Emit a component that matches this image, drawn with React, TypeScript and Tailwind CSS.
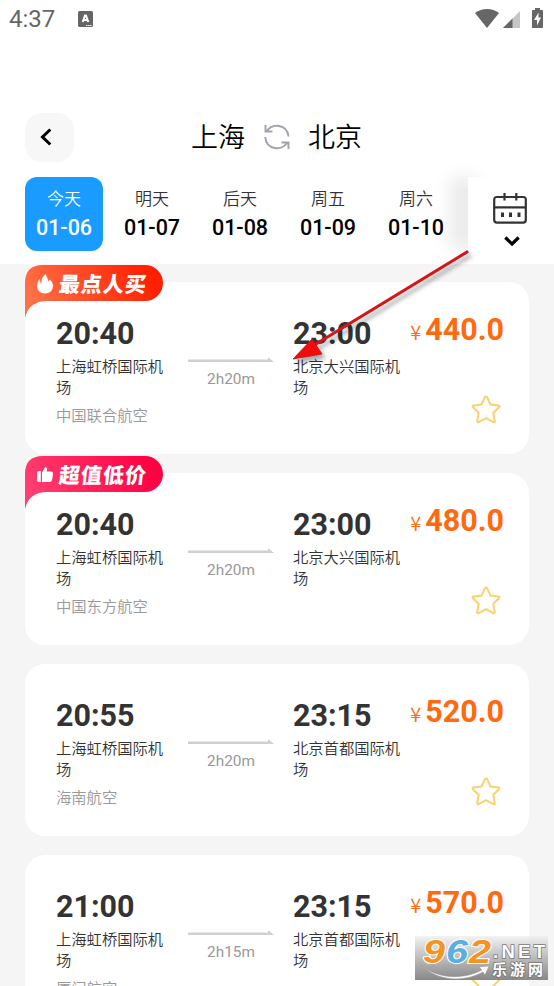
import clsx from 'clsx'

type Flight = {
  depart: string
  arrive: string
  from: string
  to: string
  duration: string
  airline: string
  price: string
  tag?: 'hot' | 'cheap'
}

const days = [
  { label: '今天', date: '01-06' },
  { label: '明天', date: '01-07' },
  { label: '后天', date: '01-08' },
  { label: '周五', date: '01-09' },
  { label: '周六', date: '01-10' },
]

const flights: Flight[] = [
  { depart: '20:40', arrive: '23:00', from: '上海虹桥国际机场', to: '北京大兴国际机场', duration: '2h20m', airline: '中国联合航空', price: '440.0', tag: 'hot' },
  { depart: '20:40', arrive: '23:00', from: '上海虹桥国际机场', to: '北京大兴国际机场', duration: '2h20m', airline: '中国东方航空', price: '480.0', tag: 'cheap' },
  { depart: '20:55', arrive: '23:15', from: '上海虹桥国际机场', to: '北京首都国际机场', duration: '2h20m', airline: '海南航空', price: '520.0' },
  { depart: '21:00', arrive: '23:15', from: '上海虹桥国际机场', to: '北京首都国际机场', duration: '2h15m', airline: '厦门航空', price: '570.0' },
]

const StatusBar = () => (
  <div className="flex h-10 items-start justify-between pt-[6px] pr-[11px] pl-[9px] text-[#666]">
    <div className="flex items-center">
      <span className="text-[24px] leading-[26px]">4:37</span>
      <svg className="mt-[-1px] ml-[23px]" width="15" height="16" viewBox="0 0 15 16">
        <rect width="15" height="16" rx="1.5" fill="#666" />
        <path d="M4.700 11L7 4.500h1L10.300 11M5.700 9h3.600" fill="none" stroke="#fff" strokeWidth="2" />
        <path d="M8 14.500h5.500" stroke="#fff" strokeWidth="1" strokeDasharray="1.500 .6" />
      </svg>
    </div>
    <div className="flex items-start pt-[1px]">
      <svg className="mt-[2px]" width="24" height="19" viewBox="0 0 24 19">
        <path d="M0 4C7-1.300 17-1.300 24 4L12 19z" fill="#666" />
      </svg>
      <svg className="mt-[4px] ml-[4px]" width="17" height="17" viewBox="0 0 17 17">
        <path d="M17 0v17H0z" fill="#c6c6c6" />
        <path d="M9.500 7.500V17H0z" fill="#666" />
      </svg>
      <svg className="mt-[1px] ml-[12px]" width="11" height="20" viewBox="0 0 11 20">
        <path d="M3 0h5v2h2.200q.8 0 .8.8v16.400q0 .8-.8.8H.8q-.8 0-.8-.8V2.800Q0 2 .8 2H3z" fill="#666" />
        <path d="M6.500 4.500L2 12h3v5.500l4-8H6.500z" fill="#fff" />
      </svg>
    </div>
  </div>
)

const RouteHeader = () => (
  <div className="mt-[72px] flex h-[50px] items-center pl-[25px]">
    <button className="flex h-[49px] w-[49px] items-center justify-center rounded-[17px] bg-[#f7f7f7]">
      <svg className="mr-[7px]" width="12" height="18" viewBox="0 0 12 18">
        <path d="M10.300 1.500L2.500 9l7.800 7.500" fill="none" stroke="#000" strokeWidth="3" />
      </svg>
    </button>
    <div className="ml-[117px] flex items-center pt-[1px] text-[27px] leading-[40px] font-[350] text-black">
      <span>上海</span>
      <svg className="mt-[-1px] mr-[18px] ml-[19px]" width="26" height="26" viewBox="0 0 26 26" fill="none" stroke="#a3a3ad" strokeWidth="2">
        <path d="M1.500 1v6.500h7M2.500 7.500C8-.8 23-.8 24.500 12.500" />
        <path d="M24.500 25v-6.500h-7M23.500 18.500C18 27 2.500 26.500 1.200 13" />
      </svg>
      <span>北京</span>
    </div>
  </div>
)

const DateBar = () => (
  <div className="relative mt-[15px] flex h-[87px] pl-[25px]">
    <div className="flex h-[74px] gap-[10px]">
      {days.map((day, i) => (
        <div
          key={day.date}
          className={clsx(
            'flex w-[78px] flex-col items-center rounded-[12px] pt-[11px]',
            i === 0 ? 'bg-[#199bff] text-white' : 'text-black',
          )}
        >
          <span className={clsx('text-[17px] leading-[22px] font-[350]', i > 0 && 'text-[#333]')}>{day.label}</span>
          <span className="mt-[5px] text-[21.500px] leading-[26px] font-medium">{day.date}</span>
        </div>
      ))}
    </div>
    <div className="absolute top-0 left-[450px] h-[72px] w-[28px] bg-black/8 blur-[8px]" />
    <div className="absolute top-0 left-[468px] flex h-[86px] w-[86px] flex-col items-center bg-white pt-[16px]">
      <svg className="mr-[2px]" width="34" height="31" viewBox="0 0 34 31" fill="none" stroke="#333" strokeWidth="2.200">
        <rect x="1.200" y="4" width="31.600" height="25.600" rx="2.500" />
        <path d="M1 14.300h32M11.500 0v7.500M23.300 0v7.500" />
        <path d="M9.500 19.500v4.500M17.500 19.500v4.500M26 19.500v4.500" strokeWidth="3" />
      </svg>
      <svg className="mt-[12px] ml-[1px]" width="16" height="11" viewBox="0 0 16 11">
        <path d="M1.300 1.500L8 8l6.700-6.500" fill="none" stroke="#000" strokeWidth="3.200" />
      </svg>
    </div>
  </div>
)

const Tag = ({ type }: { type: 'hot' | 'cheap' }) => {
  const hot = type === 'hot'
  return (
    <div className="absolute top-[-17px] left-0 h-[53px] w-[138px]">
      <svg className="absolute inset-0" width="138" height="53" viewBox="0 0 138 53">
        <defs>
          <linearGradient id={type} x1="0" y1="0.500" x2="1" y2="0.300">
            <stop offset="0" stopColor={hot ? '#ff7248' : '#ff3f70'} />
            <stop offset="0.850" stopColor={hot ? '#ff2608' : '#ff0648'} />
            <stop offset="1" stopColor={hot ? '#ff1d00' : '#ff003f'} />
          </linearGradient>
        </defs>
        <path d="M0 53V18Q0 0 18 0h102a18 18 0 0 1 0 36H22Q4 36 0 53z" fill={`url(#${type})`} />
      </svg>
      <div className="relative flex h-[38px] items-center pl-[12px] text-white">
        {hot ? (
          <svg width="16" height="20" viewBox="0 0 16 20" fill="currentColor">
            <path d="M8.800 0C9.200 2.500 11 4.500 11.500 7.500l1-2C15 7 16 9.500 16 12c0 4.500-3.500 7.500-8 7.500S0 16.500 0 12c0-3 1-5.500 3-7 0 2 .3 3.500 1 4.500.5-1 .7-2 .8-4C5.500 3 7 1 8.800 0z" />
          </svg>
        ) : (
          <svg width="16" height="16" viewBox="0 0 16 16" fill="currentColor">
            <path d="M3.800 4V15H2Q0 15 0 13V6q0-2 2-2zM5 5.500L7.800.8Q8.500 0 9.500.5q1 .8.500 2.500L9.500 4.500H14q2.200 0 2 2.200l-.8 5.800Q14.800 15 12.500 15H5z" />
          </svg>
        )}
        <span className="mt-[1px] ml-[6px] -skew-x-6 text-[21px] leading-[28px] font-black tracking-[1px] whitespace-nowrap">
          {hot ? '最点人买' : '超值低价'}
        </span>
      </div>
    </div>
  )
}

const FlightCard = ({ flight }: { flight: Flight }) => (
  <div className="relative flex h-[172px] shrink-0 rounded-[20px] bg-white pt-[34px] pr-[25px] pl-[31px]">
    {flight.tag && <Tag type={flight.tag} />}
    <div className="w-[112px]">
      <div className="text-[30.500px] leading-[36px] font-bold text-[#333]">{flight.depart}</div>
      <div className="mt-[5px] text-[15.300px] leading-[21px] font-[350] text-[#333]">{flight.from}</div>
      <div className="mt-[6px] text-[15.300px] leading-[22px] font-[350] whitespace-nowrap text-[#999]">{flight.airline}</div>
    </div>
    <div className="mt-[41px] ml-[20px] flex w-[86px] flex-col items-center">
      <svg width="86" height="5" viewBox="0 0 86 5">
        <path d="M0 2.500h80V0l6 5H0z" fill="#d0d0d0" />
      </svg>
      <span className="mt-[7px] text-[15.400px] leading-[20px] text-[#999]">{flight.duration}</span>
    </div>
    <div className="ml-[19px] w-[112px]">
      <div className="text-[30.500px] leading-[36px] font-bold text-[#333]">{flight.arrive}</div>
      <div className="mt-[5px] text-[15.300px] leading-[21px] font-[350] text-[#333]">{flight.to}</div>
    </div>
    <div className="mt-[-4px] flex flex-1 flex-col items-end">
      <div className="flex h-[36px] items-baseline whitespace-nowrap text-[#ff6a10]">
        <span className="mr-[4px] font-['Noto_Sans_CJK_SC',sans-serif] text-[20px] leading-[36px] font-[350]">¥</span>
        <span className="text-[30.500px] leading-[36px] font-bold">{flight.price}</span>
      </div>
      <svg className="mt-[47px] mr-[3px]" width="30" height="30" viewBox="0 0 30 30">
        <path d="M15 1.500q.8 0 1.200.9l3.300 7.200 8 1q1.700.3.500 1.600l-5.700 5.700 1.500 8.200q.2 1.800-1.500 1L15 23.200l-7.300 3.900q-1.700.8-1.500-1l1.500-8.200L2 12.200q-1.200-1.300.5-1.600l8-1 3.300-7.200q.4-.9 1.200-.9z" fill="none" stroke="#fbd06e" strokeWidth="2" />
      </svg>
    </div>
  </div>
)

const Watermark = () => (
  <div className="absolute top-[936px] left-[415px] h-[44px] w-[133px] bg-linear-to-b from-[#eeeeee]/70 to-[#888888]">
    <svg className="overflow-visible" width="133" height="44" viewBox="0 0 133 44">
      <path d="M6 29C22 43 48 44 67 34l-3-3 10-1-4 9-2-3C48 47 22 45 6 29z" fill="#fff" stroke="#999" strokeWidth=".6" />
      <g fontFamily="Liberation Sans" fontWeight="bold" fontSize="33" fontStyle="italic" stroke="#fff" strokeWidth="2" paintOrder="stroke">
        <text x="8" y="27" textLength="22" lengthAdjust="spacingAndGlyphs" fill="#f59322">9</text>
        <text x="31" y="27" textLength="22" lengthAdjust="spacingAndGlyphs" fill="#5aaee0">6</text>
        <text x="54" y="27" textLength="22" lengthAdjust="spacingAndGlyphs" fill="#f59322">2</text>
      </g>
      <g fill="#fff" stroke="#777" strokeWidth="1.500" paintOrder="stroke">
        <text x="78" y="22" textLength="52" fontFamily="Liberation Sans" fontWeight="bold" fontSize="18.500">.NET</text>
        <text x="77" y="39" textLength="51" fontFamily="Noto Sans CJK SC" fontWeight="bold" fontSize="15">乐游网</text>
      </g>
    </svg>
  </div>
)

const App = () => (
  <div className="relative flex h-[986px] w-[554px] flex-col overflow-hidden bg-[#f5f5f5] font-[Roboto,'Noto_Sans_CJK_SC',sans-serif]">
    <header className="h-[264px] shrink-0 bg-white">
      <StatusBar />
      <RouteHeader />
      <DateBar />
    </header>
    <main className="flex flex-col gap-[19px] px-[25px] pt-[18px]">
      {flights.map((flight) => (
        <FlightCard key={flight.depart + flight.price} flight={flight} />
      ))}
    </main>
    {/* annotation arrow pointing at the arrival airport */}
    <svg className="absolute top-[240px] left-[280px] drop-shadow-[3px_4px_2px_rgba(0,0,0,0.35)]" width="200" height="130" viewBox="0 0 200 130">
      <path d="M187 12L36 104" stroke="#d4151a" strokeWidth="3.200" strokeLinecap="round" />
      <path d="M13 119L32 99l10 15z" fill="#f30b0b" stroke="#b51414" strokeWidth=".8" />
    </svg>
    <Watermark />
  </div>
)

export default App
